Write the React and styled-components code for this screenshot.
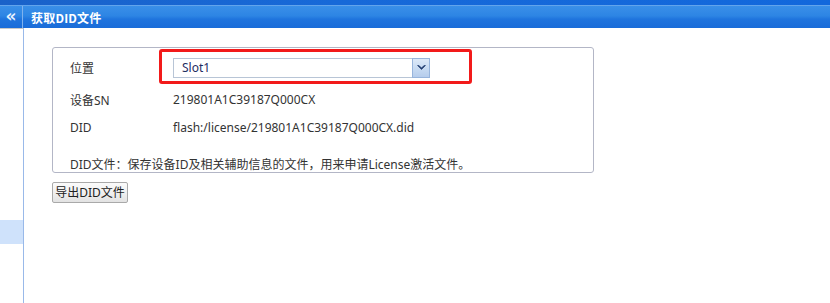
import styled, { createGlobalStyle } from "styled-components";

const Global = createGlobalStyle`
  html, body {
    margin: 0;
    padding: 0;
    background: #fff;
  }
  body {
    font-family: "Noto Sans", "Noto Sans CJK SC", sans-serif;
    font-size: 12px;
    color: #333;
  }
`

const Page = styled.div`
  display: flex;
  flex-direction: column;
  width: 830px;
  height: 303px;
  overflow: hidden;
`

const TopStrip = styled.div`
  height: 5px;
  background: linear-gradient(90deg, #1a62c9 0%, #1769d8 40%, #1268dc 100%);
`

const Header = styled.div`
  display: flex;
  height: 22px;
  border-top: 1px solid #62a4ec;
  background: linear-gradient(180deg, #3a8fe8 0%, #2d85e4 45%, #1f74dd 60%, #1a6cd9 100%);
`

const Collapse = styled.div`
  width: 23px;
  border-right: 1px solid #7fb2ee;
  display: flex;
  align-items: center;
  justify-content: center;
  color: #e8f2ff;
  font-family: "DejaVu Sans", sans-serif;
  font-size: 17px;
  font-weight: bold;
  line-height: 1;
  padding-bottom: 1px;
  box-sizing: border-box;
`

const Title = styled.div`
  display: flex;
  align-items: center;
  padding-left: 8px;
  color: #fff;
  font-family: "Noto Sans CJK SC", sans-serif;
  font-weight: bold;
  font-size: 12px;
  letter-spacing: 0.2px;
`

const Body = styled.div`
  flex: 1;
  display: flex;
`

const Sidebar = styled.div`
  width: 23px;
  border-right: 1px solid #99b9e9;
  border-top: 1px solid #c8c8c8;
  display: flex;
  flex-direction: column;
`

const SideItem = styled.div`
  height: 24px;
  margin-top: ${p => p.top}px;
  background: ${p => (p.active ? "#cfe2fb" : "transparent")};
`

const Content = styled.div`
  flex: 1;
  padding: 19px 0 0 28px;
`

const Box = styled.div`
  width: 542px;
  box-sizing: border-box;
  border: 1px solid #b3b6c6;
  border-radius: 3px;
  padding: 5px 0 0 17px;
`

const Row = styled.div`
  display: flex;
  align-items: center;
  height: ${p => p.h}px;
`

const Label = styled.div`
  width: 103px;
  flex-shrink: 0;
  color: #333;
`

const Value = styled.div`
  color: #333;
  position: relative;
`

const Select = styled.div`
  display: flex;
  width: 257px;
  height: 20px;
  box-sizing: border-box;
  border: 1px solid #b8c5d6;
  background: #fff;
`

const SelectText = styled.div`
  flex: 1;
  padding-left: 8px;
  line-height: 18px;
  color: #1e2d62;
`

const SelectButton = styled.div`
  width: 16px;
  margin: -1px -1px -1px 0;
  border: 1px solid #97b4dc;
  background: linear-gradient(180deg, #dde9f8 0%, #c4d8f1 60%, #b6cdec 100%);
  display: flex;
  align-items: center;
  justify-content: center;
`

const Highlight = styled.div`
  position: absolute;
  left: -14px;
  top: -9px;
  width: 313px;
  height: 35px;
  box-sizing: border-box;
  border: 3px solid #f21a1a;
  border-radius: 3px;
  pointer-events: none;
`

const Note = styled.div`
  margin-top: 19px;
  line-height: 14px;
  height: 14px;
  color: #333;
`

const Export = styled.button`
  margin-top: 9px;
  width: 76px;
  height: 21px;
  padding: 0;
  font-family: "Noto Sans", "Noto Sans CJK SC", sans-serif;
  font-size: 12px;
  color: #222;
  border: 1px solid #a9a9a9;
  border-radius: 2px;
  background: linear-gradient(180deg, #fbfbfb 0%, #efefef 55%, #e2e2e2 100%);
  line-height: 18px;
  white-space: nowrap;
`

function Chevron() {
  return (
    <svg width="9" height="6" viewBox="0 0 9 6">
      <path d="M0.5 0.5 L4.5 4.5 L8.5 0.5 L7 0.5 L4.5 3 L2 0.5 Z" fill="#1f3a6e" stroke="#1f3a6e" strokeWidth="0.6" />
    </svg>
  )
}

function App() {
  return (
    <Page>
      <Global />
      <TopStrip />
      <Header>
        <Collapse>«</Collapse>
        <Title>获取DID文件</Title>
      </Header>
      <Body>
        <Sidebar>
          <SideItem top={191} active />
        </Sidebar>
        <Content>
          <Box>
            <Row h={30}>
              <Label>位置</Label>
              <Value>
                <Select>
                  <SelectText>Slot1</SelectText>
                  <SelectButton><Chevron /></SelectButton>
                </Select>
                <Highlight />
              </Value>
            </Row>
            <Row h={33}>
              <Label>设备SN</Label>
              <Value>219801A1C39187Q000CX</Value>
            </Row>
            <Row h={23}>
              <Label>DID</Label>
              <Value>flash:/license/219801A1C39187Q000CX.did</Value>
            </Row>
            <Note>DID文件：保存设备ID及相关辅助信息的文件，用来申请License激活文件。</Note>
          </Box>
          <Export>导出DID文件</Export>
        </Content>
      </Body>
    </Page>
  );
}

export default App;
